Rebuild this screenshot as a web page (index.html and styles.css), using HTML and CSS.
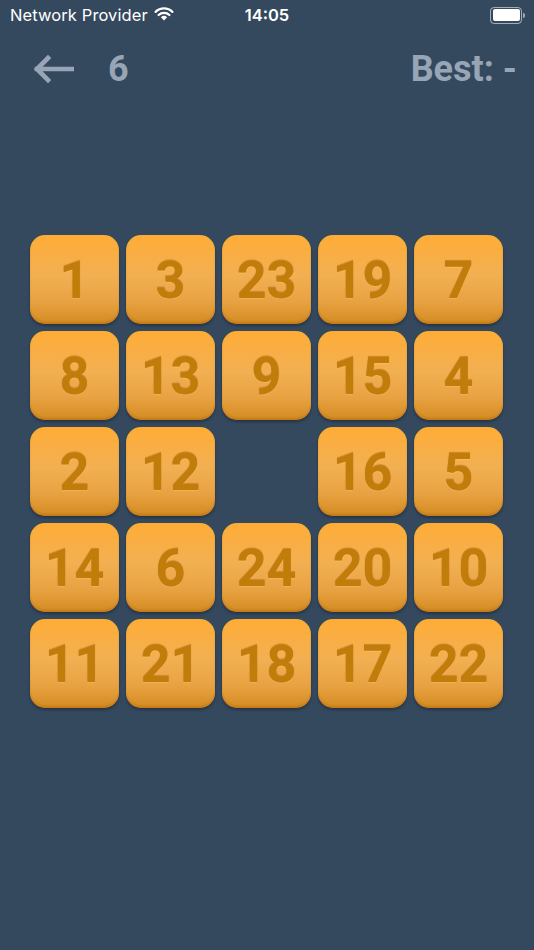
FILE: index.html
```html
<!DOCTYPE html>
<html>
<head>
<meta charset="utf-8">
<link rel="stylesheet" href="styles.css">
</head>
<body>
<div class="screen">
  <div class="status">
    <div class="carrier">Network Provider
      <svg class="wifi" width="20" height="14" viewBox="0 0 20 14"><path d="M10 13.5 L6.9 10.3 A4.5 4.5 0 0 1 13.1 10.3 Z" fill="#fff"/><path d="M4.6 8 A7.8 7.8 0 0 1 15.4 8" stroke="#fff" stroke-width="2.2" fill="none" stroke-linecap="round"/><path d="M1.6 4.9 A12 12 0 0 1 18.4 4.9" stroke="#fff" stroke-width="2.2" fill="none" stroke-linecap="round"/></svg>
    </div>
    <div class="time">14:05</div>
    <div class="battery"><div class="batt-body"><div class="batt-fill"></div></div><div class="batt-cap"></div></div>
  </div>
  <div class="header">
    <svg class="back" width="42" height="30" viewBox="0 0 42 30"><path d="M40 15 H5 M16 4 L5 15 L16 26" stroke="#97a5b6" stroke-width="4.6" fill="none" stroke-linecap="square"/></svg>
    <div class="moves">6</div>
    <div class="best">Best: -</div>
  </div>
  <div class="board">
    <div class="tile">1</div><div class="tile">3</div><div class="tile">23</div><div class="tile">19</div><div class="tile">7</div>
    <div class="tile">8</div><div class="tile">13</div><div class="tile">9</div><div class="tile">15</div><div class="tile">4</div>
    <div class="tile">2</div><div class="tile">12</div><div class="empty"></div><div class="tile">16</div><div class="tile">5</div>
    <div class="tile">14</div><div class="tile">6</div><div class="tile">24</div><div class="tile">20</div><div class="tile">10</div>
    <div class="tile">11</div><div class="tile">21</div><div class="tile">18</div><div class="tile">17</div><div class="tile">22</div>
  </div>
</div>
</body>
</html>
```
FILE: styles.css
```css
html, body {
  margin: 0;
  padding: 0;
  background: #34495e;
}
.screen {
  width: 534px;
  height: 950px;
  background: #34495e;
  overflow: hidden;
  font-family: Roboto, "Liberation Sans", sans-serif;
}
.status {
  height: 30px;
  display: flex;
  align-items: center;
  justify-content: space-between;
  padding: 0 10px;
  color: #fff;
  font-family: Inter, "Liberation Sans", sans-serif;
  position: relative;
}
.carrier {
  font-size: 16.5px;
  display: flex;
  align-items: center;
  gap: 6px;
  letter-spacing: 0.1px;
}
.wifi {
  margin-top: -2px;
}
.time {
  position: absolute;
  left: 0;
  right: 0;
  text-align: center;
  font-size: 16.5px;
  font-weight: 600;
  pointer-events: none;
}
.battery {
  display: flex;
  align-items: center;
  margin-right: -1px;
}
.batt-body {
  width: 27px;
  height: 12px;
  border: 1.5px solid rgba(255,255,255,0.55);
  border-radius: 4px;
  padding: 1.5px;
  box-sizing: content-box;
}
.batt-fill {
  width: 100%;
  height: 100%;
  background: #fff;
  border-radius: 2px;
}
.batt-cap {
  width: 2px;
  height: 5px;
  background: rgba(255,255,255,0.55);
  border-radius: 0 2px 2px 0;
  margin-left: 1px;
}
.header {
  display: flex;
  align-items: center;
  height: 80px;
  margin-top: -1px;
  padding: 0 17px 0 32px;
  color: #97a5b6;
  font-weight: 700;
  font-size: 36px;
}
.back {
  display: block;
}
.moves {
  margin-left: 34px;
}
.best {
  margin-left: auto;
}
.board {
  display: grid;
  grid-template-columns: repeat(5, 89px);
  grid-auto-rows: 89px;
  gap: 7px;
  margin: 126px 0 0 30px;
}
.tile {
  border-radius: 15px;
  background: linear-gradient(180deg, #ffac36 0%, #f2b052 45%, #e8a242 75%, #d38a20 100%);
  box-shadow: 0 2px 3px rgba(0,0,0,0.3), inset 0 -2px 2px rgba(150,80,0,0.25);
  display: flex;
  align-items: center;
  justify-content: center;
  font-size: 52px;
  font-weight: 700;
  color: #c27c0a;
  text-shadow: 0 -1px 1px rgba(130,70,0,0.4), 0 1px 1px rgba(255,220,150,0.25);
  padding-top: 1px;
  box-sizing: border-box;
}
```
